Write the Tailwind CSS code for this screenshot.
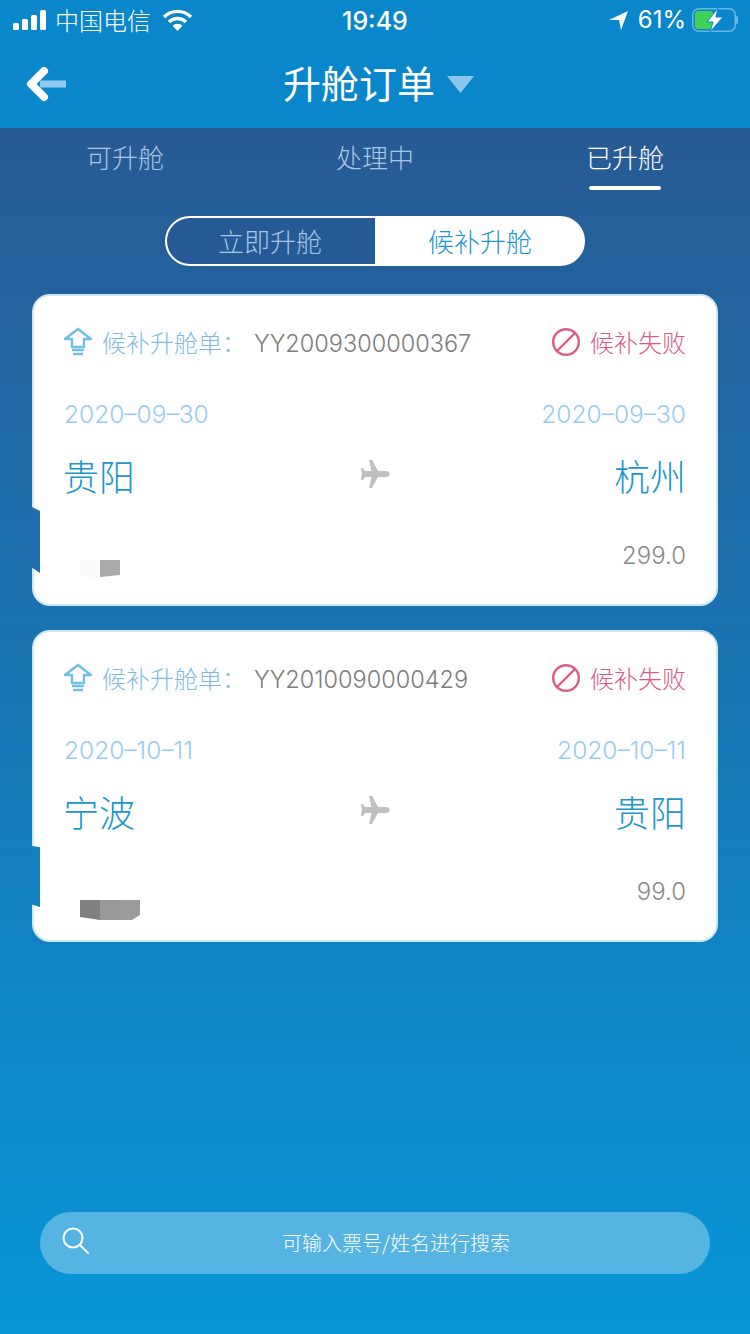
<!DOCTYPE html>
<html lang="zh" class="w-full h-full">
	<head>
		<meta charset="UTF-8">
		<meta name="viewport" content="width=device-width, initial-scale=1.0, user-scalable=no">
		<title>升舱订单</title>
		<script src="https://cdn.jsdelivr.net/npm/@tailwindcss/browser@4"></script>
	</head>
	<body class="w-[750px] h-[1334px] overflow-hidden flex flex-col font-['Noto_Sans_CJK_SC','Liberation_Sans',sans-serif] font-light">
		<header class="h-[128px] shrink-0 bg-[#0a86ca] text-white">
			<!-- status bar -->
			<div class="h-[40px] relative flex items-center justify-between pl-[13px] pr-[12px] font-['Inter','Noto_Sans_CJK_SC',sans-serif]">
				<div class="flex items-center">
					<svg width="34" height="20" viewBox="0 0 34 20" fill="#fff">
						<rect x="0" y="13" width="6" height="7" rx="1.5"/>
						<rect x="9" y="9" width="6" height="11" rx="1.5"/>
						<rect x="18" y="5" width="6" height="15" rx="1.5"/>
						<rect x="27" y="0" width="6" height="20" rx="1.5"/>
					</svg>
					<span class="ml-[8px] text-[24px] leading-none font-['Noto_Sans_CJK_SC',sans-serif] font-light">中国电信</span>
					<svg class="ml-[11px]" width="31" height="22" viewBox="0 0 31 22" fill="none" stroke="#fff" stroke-width="3.4">
						<path d="M2 8 A19 19 0 0 1 29 8"/>
						<path d="M7 13 A12 12 0 0 1 24 13"/>
						<path d="M15.5 22 L10.5 16.8 A7 7 0 0 1 20.5 16.8 Z" fill="#fff" stroke="none"/>
					</svg>
				</div>
				<span class="absolute left-[342px] top-[6px] text-[25px] leading-[30px] font-medium">19:49</span>
				<div class="flex items-center">
					<svg width="20" height="20" viewBox="0 0 20 20" fill="#fff"><path d="M0 10 L19 1 L12 20 L10 10 Z"/></svg>
					<span class="ml-[9px] text-[24px] leading-none font-normal">61%</span>
					<svg class="ml-[6px]" width="46" height="24" viewBox="0 0 46 24" fill="none">
						<rect x="0.750" y="0.750" width="42.500" height="22.500" rx="6" stroke="#66b8e6" stroke-width="1.5"/>
						<rect x="3" y="3" width="18" height="18" rx="3" fill="#3fd158"/>
						<path d="M45 9 v6" stroke="#66b8e6" stroke-width="2" stroke-linecap="round"/>
						<path d="M26 0 L15 14 H21 L18 24 L31 9 H24 Z" fill="#fff" stroke="#0a86ca" stroke-width="1"/>
					</svg>
				</div>
			</div>
			<!-- title row -->
			<div class="h-[88px] relative flex items-center justify-center pb-[5px]">
				<svg class="absolute left-[26px] top-[27px]" width="42" height="36" viewBox="0 0 42 36" fill="none" stroke-linecap="round" stroke-linejoin="round">
					<path d="M14 17 H40" stroke="#8fcbef" stroke-width="7" stroke-linecap="butt"/>
					<path d="M18 4 L5 17 L18 30" stroke="#fff" stroke-width="8"/>
				</svg>
				<span class="text-[38px] leading-[48px] font-normal mr-[32px]">升舱订单</span>
				<svg class="absolute left-[447px] top-[36px]" width="27" height="17" viewBox="0 0 27 17" fill="#8cc8ec"><path d="M0 0 H27 L13.500 17 Z"/></svg>
			</div>
		</header>

		<div class="flex-1 flex flex-col bg-linear-to-b/srgb from-[#285a94] to-[#0796d8]">
			<!-- order state tabs -->
			<nav class="h-[62px] shrink-0 grid grid-cols-3 text-[26px] text-center text-[#a9c6e4]">
				<div class="leading-[58px]">可升舱</div>
				<div class="leading-[58px]">处理中</div>
				<div class="leading-[58px] text-white relative">
					已升舱
					<div class="absolute left-[89px] bottom-0 w-[72px] h-[4px] rounded-full bg-white"></div>
				</div>
			</nav>

			<!-- immediate / standby switch -->
			<div class="mt-[26px] mx-auto w-[420px] h-[50px] shrink-0 flex rounded-full border-2 border-white bg-white text-[26px] leading-[46px] text-center">
				<div class="w-[208px] pr-[2px] rounded-l-full bg-[#265a96] text-[#a9c6e4]">立即升舱</div>
				<div class="flex-1 pl-[2px] text-[#1b97cc]">候补升舱</div>
			</div>

			<main class="mt-[28px] mx-[32px] flex flex-col gap-[24px]">
				<section class="relative h-[312px] rounded-[18px] bg-white border-2 border-[#cfe6f6] pl-[31px] pr-[30px]">
					<div class="absolute left-[-2px] top-[211px] w-[8px] h-[66px] bg-[#1d6eab] [clip-path:polygon(0_0,100%_6%,100%_100%,0_92%)]"></div>
					<div class="h-[94px] flex items-center pb-[3px]">
						<svg class="ml-[-2px]" width="30" height="30" viewBox="0 0 30 30" fill="none" stroke="#6fbfe8" stroke-width="2.400">
							<path d="M15 2 L28 12 H21 V20 H9 V12 H2 Z" stroke-linejoin="round"/>
							<path d="M9 23 H21 M10 27 H20"/>
						</svg>
						<span class="ml-[9px] text-[24px] text-[#7fbbe3]">候补升舱单：</span>
						<span class="ml-[8px] pt-[4px] text-[23.5px] text-[#7c7c7c] font-['Inter',sans-serif]">YY2009300000367</span>
						<svg class="ml-auto" width="30" height="30" viewBox="0 0 30 30" fill="none" stroke="#dc5b88" stroke-width="2.400"><circle cx="15" cy="15" r="12.800"/><path d="M6 24 L24 6"/></svg>
						<span class="ml-[9px] text-[24px] text-[#d95a85]">候补失败</span>
					</div>
					<div class="flex justify-between text-[24.5px] leading-[30px] text-[#97cdee] mt-[9px] font-['Inter',sans-serif]">
						<span class="ml-[-1px]">2020–09–30</span><span>2020–09–30</span>
					</div>
					<div class="flex items-center justify-between text-[36px] leading-[50px] text-[#1b97cc] mt-[21px]">
						<span class="ml-[-2px]">贵阳</span>
						<svg class="mb-[2px]" width="30" height="30" viewBox="0 0 30 30" fill="#c0c0c0"><path d="M9 1 H12 L18 12 H27 Q30 13.500 30 15 Q30 16.500 27 18 H18 L12 29 H9 L11.500 18 H5 L3 21 H1 L2 15 L1 9 H3 L5 12 H11.500 Z"/></svg>
						<span>杭州</span>
					</div>
					<div class="relative flex justify-end text-[24px] leading-[30px] text-[#888] mt-[41px] font-['Inter',sans-serif]">
						<span>299.0</span>
						<svg class="absolute left-[15px] top-[19px]" width="40" height="18" viewBox="0 0 40 18"><path d="M0 0 H20 V18 L0 16 Z" fill="#fafafa"/><path d="M20 0 H40 V15 L20 17 Z" fill="#aaa"/></svg>
					</div>
				</section>

				<section class="relative h-[312px] rounded-[18px] bg-white border-2 border-[#cfe6f6] pl-[31px] pr-[30px]">
					<div class="absolute left-[-2px] top-[214px] w-[8px] h-[61px] bg-[#147fbe] [clip-path:polygon(0_0,100%_2%,100%_100%,0_96%)]"></div>
					<div class="h-[94px] flex items-center pb-[3px]">
						<svg class="ml-[-2px]" width="30" height="30" viewBox="0 0 30 30" fill="none" stroke="#6fbfe8" stroke-width="2.400">
							<path d="M15 2 L28 12 H21 V20 H9 V12 H2 Z" stroke-linejoin="round"/>
							<path d="M9 23 H21 M10 27 H20"/>
						</svg>
						<span class="ml-[9px] text-[24px] text-[#7fbbe3]">候补升舱单：</span>
						<span class="ml-[8px] pt-[4px] text-[23.5px] text-[#7c7c7c] font-['Inter',sans-serif]">YY2010090000429</span>
						<svg class="ml-auto" width="30" height="30" viewBox="0 0 30 30" fill="none" stroke="#dc5b88" stroke-width="2.400"><circle cx="15" cy="15" r="12.800"/><path d="M6 24 L24 6"/></svg>
						<span class="ml-[9px] text-[24px] text-[#d95a85]">候补失败</span>
					</div>
					<div class="flex justify-between text-[24.5px] leading-[30px] text-[#97cdee] mt-[9px] font-['Inter',sans-serif]">
						<span class="ml-[-1px]">2020–10–11</span><span>2020–10–11</span>
					</div>
					<div class="flex items-center justify-between text-[36px] leading-[50px] text-[#1b97cc] mt-[21px]">
						<span class="ml-[-2px]">宁波</span>
						<svg class="mb-[2px]" width="30" height="30" viewBox="0 0 30 30" fill="#c0c0c0"><path d="M9 1 H12 L18 12 H27 Q30 13.500 30 15 Q30 16.500 27 18 H18 L12 29 H9 L11.500 18 H5 L3 21 H1 L2 15 L1 9 H3 L5 12 H11.500 Z"/></svg>
						<span>贵阳</span>
					</div>
					<div class="relative flex justify-end text-[24px] leading-[30px] text-[#888] mt-[41px] font-['Inter',sans-serif]">
						<span>99.0</span>
						<svg class="absolute left-[15px] top-[23px]" width="60" height="20" viewBox="0 0 60 20"><path d="M0 0 H20 V20 L0 17 Z" fill="#808080"/><path d="M20 0 H40 V20 H20 Z" fill="#999"/><path d="M40 0 H60 V15 L52 20 H40 Z" fill="#9c9c9c"/></svg>
					</div>
				</section>
			</main>

			<!-- ticket search -->
			<div class="mt-auto mb-[60px] mx-[40px] h-[62px] shrink-0 relative flex items-center justify-center rounded-full bg-[#55b4e2] text-white text-[20px] pl-[42px]">
				<svg class="absolute left-[22px] top-[15px]" width="28" height="28" viewBox="0 0 28 28" fill="none" stroke="#fff" stroke-width="2"><circle cx="11" cy="11" r="9.500"/><path d="M18 18 L26 26" stroke-linecap="round"/></svg>
				<span>可输入票号/姓名进行搜索</span>
			</div>
		</div>
	</body>
</html>
